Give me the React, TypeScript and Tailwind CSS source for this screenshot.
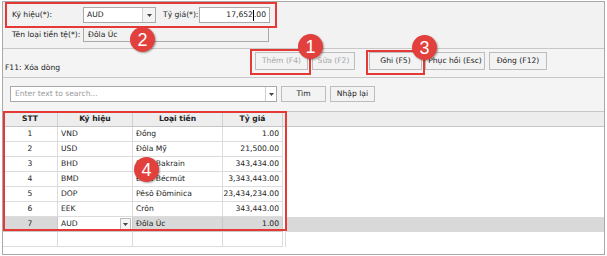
import React from "react";

const font = { fontFamily: '"DejaVu Sans", Verdana, sans-serif' };

function Arrow() {
  return (
    <svg width="5" height="3" viewBox="0 0 5 3">
      <path d="M0 0h5L2.5 3z" fill="#444" />
    </svg>
  );
}

function Btn({ w, label, disabled }: { w: string; label: string; disabled?: boolean }) {
  return (
    <div
      className={`${w} h-[18px] flex items-center justify-center border border-[#bdbdbd] bg-[#f3f3f3] ${
        disabled ? "text-[#a8a8a8]" : "text-[#222]"
      }`}
    >
      {label}
    </div>
  );
}

function Badge({ n, cls }: { n: string; cls: string }) {
  return (
    <div
      className={`absolute ${cls} w-[25px] h-[25px] rounded-full bg-[#e2403d] text-white flex items-center justify-center text-[18px] leading-none shadow-[1px_1px_2px_rgba(0,0,0,0.35)]`}
      style={{ fontFamily: '"Liberation Sans", Arial, sans-serif' }}
    >
      {n}
    </div>
  );
}

const rows = [
  ["1", "VND", "Đồng", "1.00"],
  ["2", "USD", "Đôla Mỹ", "21,500.00"],
  ["3", "BHD", "Đina Bakrain", "343,434.00"],
  ["4", "BMD", "Đôla Bécmút", "3,343,443.00"],
  ["5", "DOP", "Pêsô Đôminica", "23,434,234.00"],
  ["6", "EEK", "Crôn", "343,443.00"],
];

export default function App() {
  return (
    <div className="relative w-[607px] h-[256px] bg-white text-[7.6px] text-[#222] whitespace-nowrap" style={font}>
      <div className="absolute left-[2px] top-[1px] w-[603px] h-[254px] border border-[#a9a9a9] bg-[#f2f2f2] flex flex-col overflow-hidden">
        {/* top panel */}
        <div className="h-[47px] border-b border-[#c8c8c8] pl-[9px] pt-[5px] flex flex-col">
          <div className="flex items-center h-[16px]">
            <div className="w-[71px]">Ký hiệu(*):</div>
            <div className="w-[73px] h-[16px] bg-white border border-[#a9a9a9] flex items-center">
              <div className="flex-1 pl-[3px]">AUD</div>
              <div className="w-[13px] h-full border-l border-[#cfcfcf] bg-[#f4f4f4] flex items-center justify-center">
                <Arrow />
              </div>
            </div>
            <div className="ml-[7px] w-[36px]">Tỷ giá(*):</div>
            <div className="w-[71px] h-[16px] bg-white border border-[#a9a9a9] flex items-center justify-end pr-[3px]">
              17,652<span className="inline-block w-[1px] h-[11px] bg-black" />.00
            </div>
          </div>
          <div className="flex items-center h-[15px] mt-[4px]">
            <div className="w-[71px]">Tên loại tiền tệ(*):</div>
            <div className="w-[186px] h-[15px] border border-[#a9a9a9] bg-[#f2f2f2] flex items-center pl-[4px]">
              Đôla Úc
            </div>
          </div>
        </div>
        {/* toolbar */}
        <div className="h-[29px] border-b border-[#c8c8c8] flex pl-[2px] pt-[3px] bg-[#f4f4f4]">
          <div className="self-end mb-[4px] w-[250px]">F11: Xóa dòng</div>
          <div className="flex h-[18px]">
            <Btn w="w-[53px]" label="Thêm  (F4)" disabled />
            <div className="w-[4px]" />
            <Btn w="w-[43px]" label="Sửa  (F2)" disabled />
            <div className="w-[14px]" />
            <Btn w="w-[53px]" label="Ghi  (F5)" />
            <div className="w-[3px]" />
            <Btn w="w-[60px]" label="Phục hồi  (Esc)" />
            <div className="w-[4px]" />
            <Btn w="w-[58px]" label="Đóng  (F12)" />
          </div>
        </div>
        {/* search */}
        <div className="h-[33px] flex items-start pt-[8px] pl-[7px] bg-[#f4f4f4]">
          <div className="w-[267px] h-[16px] bg-white border border-[#a9a9a9] flex items-center">
            <div className="flex-1 pl-[4px] text-[#9a9a9a]">Enter text to search...</div>
            <div className="w-[11px] h-full border-l border-[#cfcfcf] flex items-center justify-center">
              <Arrow />
            </div>
          </div>
          <div className="ml-[4px] w-[45px] h-[16px] border border-[#bdbdbd] bg-[#f3f3f3] flex items-center justify-center">
            Tìm
          </div>
          <div className="ml-[4px] w-[45px] h-[16px] border border-[#bdbdbd] bg-[#f3f3f3] flex items-center justify-center">
            Nhập lại
          </div>
        </div>
        {/* grid */}
        <div className="flex-1 bg-white border-t border-[#c8c8c8] flex flex-col">
          <div className="h-[15px] bg-[#ededed] border-b border-[#c6c6c6] flex font-semibold">
            <div className="w-[55px] border-r border-[#d0d0d0] flex items-center justify-center">STT</div>
            <div className="w-[75px] border-r border-[#d0d0d0] flex items-center justify-center">Ký hiệu</div>
            <div className="w-[90px] border-r border-[#d0d0d0] flex items-center justify-center">Loại tiền</div>
            <div className="w-[60px] border-r border-[#d0d0d0] flex items-center justify-center">Tỷ giá</div>
            <div className="w-[3px] border-r border-[#d0d0d0]" />
          </div>
          {rows.map((r) => (
            <div key={r[0]} className="h-[15px] flex">
              <div className="w-[55px] border-r border-b border-[#dcdcdc] flex items-center justify-center">{r[0]}</div>
              <div className="w-[75px] border-r border-b border-[#dcdcdc] flex items-center pl-[3px]">{r[1]}</div>
              <div className="w-[90px] border-r border-b border-[#dcdcdc] flex items-center pl-[3px]">{r[2]}</div>
              <div className="w-[60px] border-r border-b border-[#dcdcdc] flex items-center justify-end pr-[3px]">{r[3]}</div>
              <div className="w-[3px] border-r border-[#dcdcdc]" />
            </div>
          ))}
          <div className="h-[15px] flex bg-[#d9d9d9]">
            <div className="w-[55px] border-r border-b border-[#c8c8c8] flex items-center justify-center">7</div>
            <div className="w-[75px] border-r border-b border-[#c8c8c8] bg-white flex items-center">
              <div className="flex-1 pl-[3px]">AUD</div>
              <div className="w-[11px] h-[13px] mr-[1px] border border-[#bdbdbd] bg-[#f4f4f4] flex items-center justify-center">
                <Arrow />
              </div>
            </div>
            <div className="w-[90px] border-r border-b border-[#c8c8c8] flex items-center pl-[3px]">Đôla Úc</div>
            <div className="w-[60px] border-r border-b border-[#c8c8c8] flex items-center justify-end pr-[3px]">1.00</div>
            <div className="w-[3px] border-r border-[#dcdcdc] bg-white" />
          </div>
          <div className="h-[15px] flex">
            <div className="w-[55px] border-r border-b border-[#dcdcdc]" />
            <div className="w-[75px] border-r border-b border-[#dcdcdc]" />
            <div className="w-[90px] border-r border-b border-[#dcdcdc]" />
            <div className="w-[60px] border-r border-b border-[#dcdcdc]" />
            <div className="w-[3px] border-r border-[#dcdcdc]" />
          </div>
        </div>
      </div>

      {/* annotations */}
      <div className="absolute left-[5px] top-[2px] w-[272px] h-[26px] border-2 border-[#e53935]" />
      <div className="absolute left-[250px] top-[49px] w-[61px] h-[26px] border-2 border-[#e53935]" />
      <div className="absolute left-[366px] top-[50px] w-[59px] h-[25px] border-2 border-[#e53935]" />
      <div className="absolute left-[3px] top-[111px] w-[284px] h-[120px] border-2 border-[#e53935]" />
      <Badge n="2" cls="left-[130px] top-[27px]" />
      <Badge n="1" cls="left-[298px] top-[34px]" />
      <Badge n="3" cls="left-[412px] top-[35px]" />
      <Badge n="4" cls="left-[134px] top-[157px]" />
    </div>
  );
}
